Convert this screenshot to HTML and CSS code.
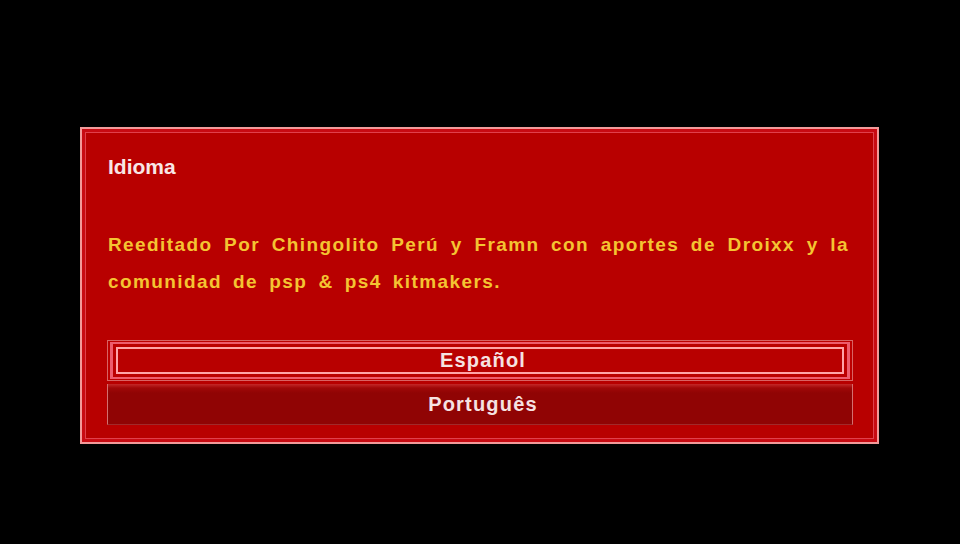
FILE: index.html
```html
<!DOCTYPE html>
<html lang="es">
<head>
<meta charset="utf-8">
<title>Idioma</title>
<link rel="stylesheet" href="styles.css">
</head>
<body>
<div class="screen">
  <div class="panel">
    <div class="title">Idioma</div>
    <p class="message">Reeditado Por Chingolito Perú y Framn con aportes de Droixx y la comunidad de psp &amp; ps4 kitmakers.</p>
    <div class="options">
      <div class="option selected">
        <div class="ring">
          <div class="ring-inner">Español</div>
        </div>
      </div>
      <div class="option normal">Português</div>
    </div>
  </div>
</div>
</body>
</html>
```
FILE: styles.css
```css
html, body {
  margin: 0;
  padding: 0;
  background: #000;
}

.screen {
  width: 960px;
  height: 544px;
  box-sizing: border-box;
  padding: 127px 0 0 80px;
  font-family: "Liberation Sans", Arial, sans-serif;
  font-weight: bold;
}

.panel {
  box-sizing: border-box;
  width: 799px;
  height: 317px;
  background: #b80000;
  border: 2px solid #f29a9a;
  box-shadow: inset 0 0 0 3px #c80a12, inset 0 0 0 4px #e0404c;
  padding: 26px 24px 0 25px;
}

.title {
  font-size: 21px;
  line-height: 24px;
  padding-left: 1px;
  color: #f8e6e6;
  margin: 0 0 47px 0;
}

.message {
  margin: 0 0 40px 0;
  padding: 0 4px 0 1px;
  font-size: 19px;
  line-height: 37px;
  letter-spacing: 1.4px;
  word-spacing: 4.5px;
  text-align: justify;
  color: #f4c432;
}

.options {
  display: flex;
  flex-direction: column;
  gap: 3px;
}

.option {
  box-sizing: border-box;
  height: 41px;
  text-align: center;
  font-size: 20px;
  letter-spacing: 1.2px;
  color: #f6e2e2;
}

.selected {
  border: 1px solid #d86464;
  padding: 1px 2px;
  background: #bc0000;
}

.ring {
  height: 100%;
  box-sizing: border-box;
  border: 2px solid #ee5c6c;
  border-left-width: 3px;
  border-right-width: 3px;
  padding: 3px;
}

.ring-inner {
  height: 100%;
  box-sizing: border-box;
  border: 2px solid #ffa4a8;
  line-height: 23px;
  padding-left: 6px;
  background: #b80000;
}

.normal {
  border-left: 1px solid #d47070;
  border-right: 1px solid #d47070;
  border-bottom: 1px solid #a02a2a;
  background: linear-gradient(#c42828 0px, #a00808 4px, #900404 9px, #900404 100%);
  line-height: 40px;
  padding-left: 6px;
}
```
